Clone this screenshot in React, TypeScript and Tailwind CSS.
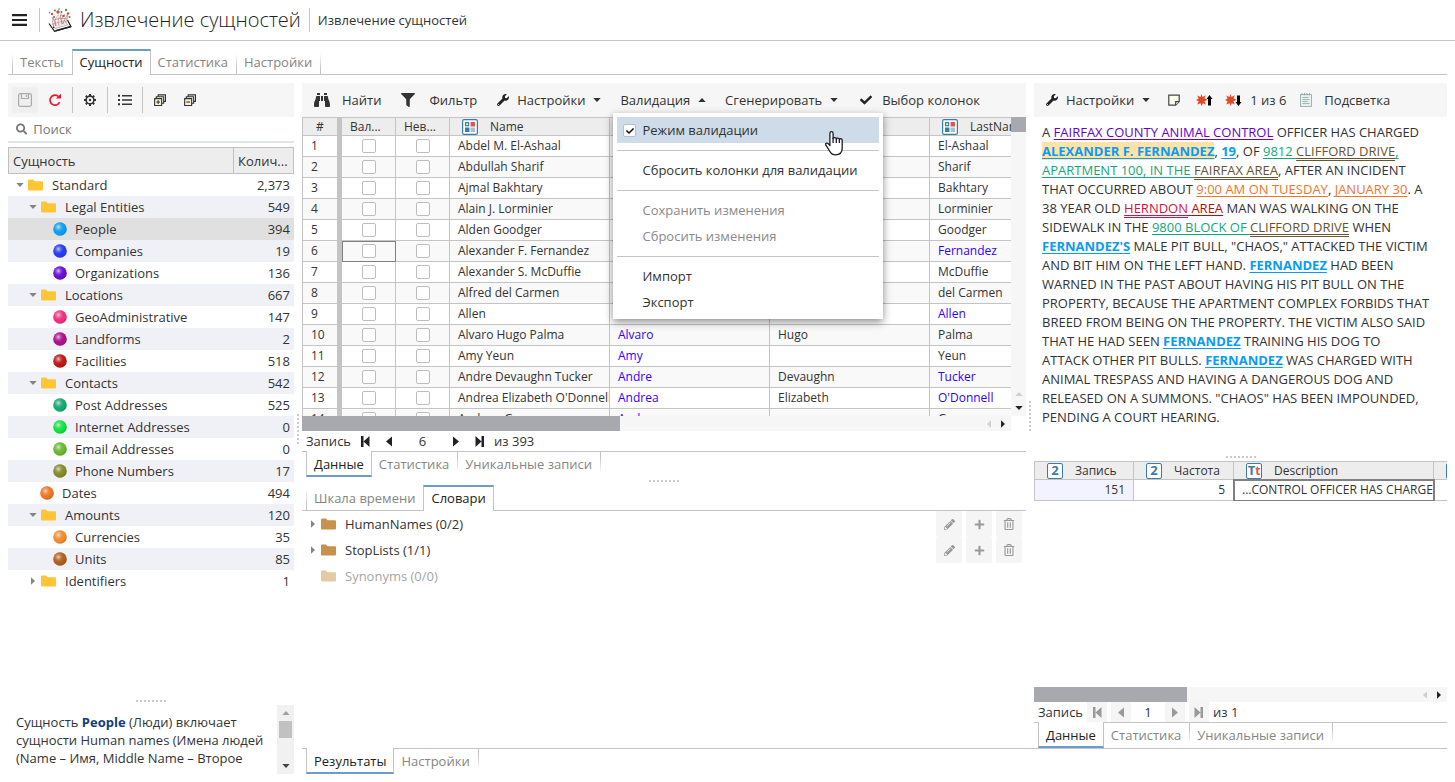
import React from "react";
import { clsx } from "clsx";
import {
  FaBinoculars,
  FaCheck,
  FaFilter,
  FaPencilAlt,
  FaPlus,
  FaRegTrashAlt,
  FaSearch,
  FaWrench,
} from "react-icons/fa";

/* ---------- icons ---------- */

function Caret({ dir = "down", className }: { dir?: "down" | "up" | "left" | "right"; className?: string }) {
  const paths = {
    down: "M.3 2h7.400L4 6z",
    up: "M.3 6h7.400L4 2z",
    left: "M6 .3v7.400L2 4z",
    right: "M2 .3v7.400L6 4z",
  };
  return (
    <svg viewBox="0 0 8 8" className={clsx("size-2 shrink-0", className)} fill="currentColor" aria-hidden="true">
      <path d={paths[dir]} />
    </svg>
  );
}

function Logo() {
  return (
    <svg viewBox="0 0 24 24" className="size-6" fill="none" aria-hidden="true">
      <path d="M1 15.500 6.500 23.300 23 18.600 19.500 12" stroke="#222" strokeWidth="1.200" />
      <path d="M7.500 22.800 23 18.600M5 19.500l3-.8" stroke="#222" strokeWidth="1.600" />
      <path d="M4.500 16 7 20.500 19.500 17 17 12.500z" fill="#f8eaea" stroke="#999" strokeWidth=".7" />
      <path d="M6 18c-2-3-2-8 1-10M8 18C6 13 8 8 11 7M11 17.500C9 12 11 8 14 7M14 16.500c-1-5 0-8 3-10M17 15c2-2 3-5 2-8M6 12c4-2 9-2 13-1" stroke="#dc7a7a" strokeWidth=".8" />
      <path d="M4 9c3 4 3 6 4 9M13 5c-1 5 0 9 2 11M20 6c-2 3-4 6-5 10" stroke="#777" strokeWidth=".6" />
      <g fill="#d94a4a">
        <circle cx="10" cy="4" r="1.700" />
        <circle cx="4" cy="6" r="1.200" />
        <circle cx="15.500" cy="8" r="1.300" />
        <circle cx="20" cy="5.500" r="1.300" />
      </g>
      <g fill="#4d8f58">
        <circle cx="7" cy="2.500" r="1" />
        <circle cx="11" cy="1" r=".8" />
        <circle cx="18" cy="2" r="1.200" />
        <circle cx="13.500" cy="4" r="1" />
        <circle cx="1.500" cy="4.500" r=".8" />
        <circle cx="21.500" cy="9" r="1" />
        <circle cx="6" cy="9" r="1" />
      </g>
    </svg>
  );
}

function SaveIcon() {
  return (
    <svg viewBox="0 0 14 14" className="size-3.5" fill="none" stroke="currentColor" strokeWidth="1.200" aria-hidden="true">
      <rect x=".6" y=".6" width="12.800" height="12.800" rx="1.800" />
      <path d="M3.500.8v4.700h7V.8M8.500 2v2" />
    </svg>
  );
}

function RefreshIcon() {
  return (
    <svg viewBox="0 0 14 14" className="size-3.5" fill="none" stroke="currentColor" strokeWidth="1.600" aria-hidden="true">
      <path d="M11.600 9.200A5 5 0 1 1 10.600 3.600" />
      <path d="M8 5.600h5V.8z" fill="currentColor" stroke="none" />
    </svg>
  );
}

function GearIcon() {
  return (
    <svg viewBox="0 0 14 14" className="size-3.5" fill="none" stroke="currentColor" aria-hidden="true">
      <circle cx="7" cy="7" r="3.900" strokeWidth="1.600" />
      <circle cx="7" cy="7" r="1.200" fill="currentColor" stroke="none" />
      <path
        d="M7 1v2M7 11v2M1 7h2M11 7h2M2.800 2.800l1.400 1.400M9.800 9.800l1.400 1.400M2.800 11.200l1.400-1.400M9.800 4.200l1.400-1.400"
        strokeWidth="2"
      />
    </svg>
  );
}

function ListIcon() {
  return (
    <svg viewBox="0 0 14 12" className="h-3 w-3.5" fill="currentColor" aria-hidden="true">
      <path d="M4 1h10v1.400H4zM4 5.300h10v1.400H4zM4 9.600h10V11H4zM0 .7h2v2H0zM0 5h2v2H0zM0 9.300h2v2H0z" />
    </svg>
  );
}

function StackIcon({ plus }: { plus?: boolean }) {
  return (
    <svg viewBox="0 0 13 13" className="size-3" fill="none" stroke="currentColor" strokeWidth="1.200" aria-hidden="true">
      <path d="M4.500 3V1h8v7h-2" />
      <path d="M2.500 5V3h8v7h-2" />
      <path d="M.7 5h7.600v7.400H.7z" fill="#fff3d0" />
      <path d={plus ? "M2.500 8.700h4M4.500 6.700v4" : "M2.500 8.700h4"} />
    </svg>
  );
}

function Folder({ color = "#ffc535" }: { color?: string }) {
  return (
    <svg viewBox="0 0 17 12" className="h-3 w-[17px] shrink-0" aria-hidden="true">
      <path d="M1 1.500Q1 .5 2 .5h4l1.500 1.700H15q1 0 1 1v7.300q0 1-1 1H2q-1 0-1-1z" fill={color} />
    </svg>
  );
}

function Ball({ color }: { color: string }) {
  const id = "ball" + color.slice(1);
  return (
    <svg viewBox="0 0 14 14" className="size-3.5 shrink-0" aria-hidden="true">
      <radialGradient id={id} cx=".38" cy=".35" r=".62">
        <stop offset="0" stopColor="#fff" stopOpacity=".75" />
        <stop offset=".7" stopColor={color} stopOpacity="0" />
        <stop offset="1" stopColor="#000" stopOpacity=".12" />
      </radialGradient>
      <circle cx="7" cy="7" r="6.800" fill={color} />
      <circle cx="7" cy="7" r="6.800" fill={`url(#${id})`} />
    </svg>
  );
}

function CategoryIcon() {
  return (
    <svg viewBox="0 0 16 16" className="size-4 shrink-0" aria-hidden="true">
      <rect x=".6" y=".6" width="14.800" height="14.800" rx="1.500" fill="#fff" stroke="#3a7ca8" strokeWidth="1.200" />
      <path d="M3.600 3.600h3v3h-3z" fill="#fff" stroke="#3a7ca8" strokeWidth="1.200" />
      <path d="M8.500 3H13v4.500H8.500z" fill="#e2574c" />
      <path d="M3 8.500h4.500V13H3z" fill="#3a7ca8" />
      <path d="M8.500 8.500H13V13H8.500z" fill="#a9bfd0" />
    </svg>
  );
}

function NumberIcon() {
  return (
    <span className="flex size-4 shrink-0 items-center justify-center rounded-xs border border-[#3a7ca8] bg-white text-[13px] leading-none font-bold text-[#3a7ca8]">
      2
    </span>
  );
}

function TextIcon() {
  return (
    <span className="flex size-4 shrink-0 items-center justify-center rounded-xs border border-[#3a7ca8] bg-white text-[13px] leading-none font-bold text-[#3a7ca8]">
      T<span className="text-[12px] text-[#e2574c]">t</span>
    </span>
  );
}

function BurstIcon({ down }: { down?: boolean }) {
  return (
    <svg viewBox="0 0 17 12" className="h-3 w-[17px]" aria-hidden="true">
      <path
        d="M5.500 0l1 3L9.700 1.200 8.500 4.300 11.500 5.700 8.500 7.200 9.800 10.500 6.700 9.200l-1 2.800L4.500 9.200 1.300 10.600 2.600 7.300 0 6l2.600-1.400L1.200 1.500l3.300 1.500z"
        fill="#e04a26"
      />
      <path d={down ? "M13.500 12 10.500 8h1.500V1.500h3V8h1.500z" : "M13.500 1 10.500 5h1.500v6.500h3V5h1.500z"} fill="#000" />
    </svg>
  );
}

function NoteIcon() {
  return (
    <svg viewBox="0 0 12 12" className="size-3" fill="#fffdf0" stroke="#444" strokeWidth="1.200" aria-hidden="true">
      <path d="M.8 1.200h10.400v6.500l-3.500 3.500H.8z" />
      <path d="M11 7.700H7.700V11" />
    </svg>
  );
}

function DocIcon() {
  return (
    <svg viewBox="0 0 12 14" className="h-3.5 w-3" fill="none" aria-hidden="true">
      <path d="M.5 1.500h11v12H.5z" fill="#e6efee" stroke="#9db5b3" />
      <path d="M2 .2v2M4.500.2v2M7 .2v2M9.500.2v2" stroke="#8aa5a3" />
      <path d="M2.500 4.500h6M2.500 6.500h7M2.500 8.500h5M2.500 10.500h7" stroke="#9fbab7" />
    </svg>
  );
}

function SkipIcon({ end }: { end?: boolean }) {
  return (
    <svg viewBox="0 0 10 11" className="h-[11px] w-2.5" fill="currentColor" aria-hidden="true">
      <path d={end ? "M.5 0v11L6.500 5.500zM6.500 0H9v11H6.500z" : "M9.500 0v11L3.500 5.500zM1 0h2.500v11H1z"} />
    </svg>
  );
}

function StepIcon({ next }: { next?: boolean }) {
  return (
    <svg viewBox="0 0 10 11" className="h-[11px] w-2.5" fill="currentColor" aria-hidden="true">
      <path d={next ? "M2 .5v10l6-5z" : "M8 .5v10l-6-5z"} />
    </svg>
  );
}

function HandCursor() {
  return (
    <svg
      viewBox="0 0 18 25"
      className="pointer-events-none absolute top-[14px] right-[36px] h-[25px] w-[18px]"
      fill="#fff"
      stroke="#1c1c2c"
      strokeWidth="1.300"
      strokeLinejoin="round"
      aria-hidden="true"
    >
      <path d="M6.500.7C5.400.7 4.900 1.500 4.900 2.400v12.100L3.200 12.600c-.8-.8-2-.7-2.400 0s0 1.400.4 2.100L4.600 20c1.200 2.500 2.900 3.800 5.900 3.800 4.300 0 6.700-2.800 6.700-6.800V9.200c0-1.800-2.600-1.900-2.800-.6-.2-1.700-2.800-1.900-3.100-.7-.4-1.600-2.900-1.700-3.200-.5v-5C8.100 1.400 7.600.7 6.500.7z" />
      <path d="M8.100 7v5M11.300 7.800V12M14.400 8.500V12" fill="none" />
    </svg>
  );
}

/* ---------- shared pieces ---------- */

function Tabs({ items, active, bottom }: { items: string[]; active: number; bottom?: boolean }) {
  const line = bottom ? "border-t border-[#c4c4c4]" : "border-b border-[#c4c4c4]";
  const sep = clsx(
    "w-px shrink-0 from-[#c4c4c4] from-30% to-transparent",
    bottom ? "mb-1 bg-linear-to-b" : "mt-1 bg-linear-to-t"
  );
  return (
    <div role="tablist" className="flex h-[26px] shrink-0 text-[13px]">
      <div className={clsx("w-1", line)} />
      {items.map((label, i) => (
        <React.Fragment key={label}>
          {i === 0 && active !== 0 && <div className={sep} />}
          <button
            type="button"
            role="tab"
            aria-selected={i === active}
            className={clsx(
              "whitespace-nowrap",
              i === active
                ? "border-x border-x-[#c4c4c4] px-[7px] text-[#222]"
                : ["pr-2 pl-[7px] text-[#858585]", line, bottom && "pb-0.5"],
              i === active && (bottom ? "border-b-2 border-b-[#6f9bc8] pt-px" : "border-t-2 border-t-[#6f9bc8] pb-0.5")
            )}
          >
            {label}
          </button>
          {i !== active && i + 1 !== active && <div className={sep} />}
        </React.Fragment>
      ))}
      <div className={clsx("flex-1", line)} />
    </div>
  );
}

function Grip({ vertical }: { vertical?: boolean }) {
  return (
    <div className={clsx("flex shrink-0 items-center justify-center", vertical ? "w-2" : "h-2")}>
      <div className={clsx("flex gap-0.5", vertical && "flex-col")}>
        {[0, 1, 2, 3, 4, 5, 6, 7].map((n) => (
          <span key={n} className="size-0.5 bg-[#cbcbcb]" />
        ))}
      </div>
    </div>
  );
}

function HScroll({ thumb }: { thumb: string }) {
  return (
    <div className="flex h-[15px] shrink-0 items-center bg-[#f6f6f6]">
      <div className="h-full bg-[#a8a9ae]" style={{ width: thumb }} />
      <Caret dir="left" className="ml-auto text-[#d0d0d0]" />
      <Caret dir="right" className="mr-1 ml-1.5 text-[#222]" />
    </div>
  );
}

function Pager({ value, total, disabled }: { value: string; total: string; disabled?: boolean }) {
  const btn = clsx(
    "flex h-5 w-5 items-center justify-center",
    disabled ? "bg-[#f5f5f5] text-[#999]" : "text-[#222]"
  );
  return (
    <div className="flex h-5 shrink-0 items-center gap-1 pl-1 text-[13px]">
      <span>Запись</span>
      <button type="button" aria-label="Первая" disabled={disabled} className={btn}>
        <SkipIcon />
      </button>
      <button type="button" aria-label="Предыдущая" disabled={disabled} className={btn}>
        <StepIcon />
      </button>
      <input
        aria-label="Номер записи"
        defaultValue={value}
        className={clsx("h-5 text-center outline-none", disabled ? "w-[26px]" : "w-[39px]")}
      />
      <button type="button" aria-label="Следующая" disabled={disabled} className={btn}>
        <StepIcon next />
      </button>
      <button type="button" aria-label="Последняя" disabled={disabled} className={btn}>
        <SkipIcon end />
      </button>
      <span>{total}</span>
    </div>
  );
}

function ToolButton({
  icon,
  children,
  caret,
  className,
}: {
  icon?: React.ReactNode;
  children?: React.ReactNode;
  caret?: "up" | "down";
  className?: string;
}) {
  return (
    <button type="button" className={clsx("flex h-[26px] shrink-0 items-center whitespace-nowrap", className)}>
      {icon}
      {children}
      {caret && <Caret dir={caret} className="ml-2" />}
    </button>
  );
}

/* ---------- left panel ---------- */

type Entity = { name: string; count: string; level: number; open?: boolean; color?: string; selected?: boolean };

const entities: Entity[] = [
  { name: "Standard", count: "2,373", level: 0, open: true },
  { name: "Legal Entities", count: "549", level: 1, open: true },
  { name: "People", count: "394", level: 2, color: "#109df0", selected: true },
  { name: "Companies", count: "19", level: 2, color: "#2b3cf0" },
  { name: "Organizations", count: "136", level: 2, color: "#6a0fd6" },
  { name: "Locations", count: "667", level: 1, open: true },
  { name: "GeoAdministrative", count: "147", level: 2, color: "#f52f80" },
  { name: "Landforms", count: "2", level: 2, color: "#ab1290" },
  { name: "Facilities", count: "518", level: 2, color: "#c01818" },
  { name: "Contacts", count: "542", level: 1, open: true },
  { name: "Post Addresses", count: "525", level: 2, color: "#16a974" },
  { name: "Internet Addresses", count: "0", level: 2, color: "#14e044" },
  { name: "Email Addresses", count: "0", level: 2, color: "#6cb833" },
  { name: "Phone Numbers", count: "17", level: 2, color: "#868a28" },
  { name: "Dates", count: "494", level: 1, color: "#ee7628" },
  { name: "Amounts", count: "120", level: 1, open: true },
  { name: "Currencies", count: "35", level: 2, color: "#ef8d2e" },
  { name: "Units", count: "85", level: 2, color: "#b0601f" },
  { name: "Identifiers", count: "1", level: 1 },
];

const indent = ["pl-[6px]", "pl-[19px]", "pl-[32px]"];

function EntityPanel() {
  return (
    <aside className="flex w-[286px] shrink-0 flex-col">
      <div className="flex h-[34px] shrink-0 items-center bg-[#f6f6f6] px-1">
        <button type="button" aria-label="Сохранить" disabled className="flex size-[26px] items-center justify-center bg-[#efefef] text-[#aaa]">
          <SaveIcon />
        </button>
        <button type="button" aria-label="Обновить" className="ml-1 flex size-[26px] items-center justify-center text-[#f01428]">
          <RefreshIcon />
        </button>
        <div className="mx-1 h-[26px] w-px bg-[#c4c4c4]" />
        <button type="button" aria-label="Параметры" className="flex size-[26px] items-center justify-center">
          <GearIcon />
        </button>
        <div className="mx-1 h-[26px] w-px bg-[#c4c4c4]" />
        <button type="button" aria-label="Список" className="flex size-[26px] items-center justify-center">
          <ListIcon />
        </button>
        <div className="mx-1 h-[26px] w-px bg-[#c4c4c4]" />
        <button type="button" aria-label="Развернуть" className="flex size-[26px] items-center justify-center">
          <StackIcon plus />
        </button>
        <button type="button" aria-label="Свернуть" className="ml-1 flex size-[26px] items-center justify-center">
          <StackIcon />
        </button>
      </div>
      <label className="flex h-[26px] shrink-0 items-center gap-1.5 border-b-2 border-[#e0e4ea] pl-2">
        <FaSearch className="size-3 text-[#777]" />
        <input type="search" aria-label="Поиск" placeholder="Поиск" className="w-full outline-none placeholder:text-[#777]" />
      </label>
      <div className="min-h-0 flex-1 overflow-hidden pt-1">
        <table className="w-full table-fixed border-separate border-spacing-0">
          <colgroup>
            <col />
            <col className="w-[61px]" />
          </colgroup>
          <thead>
            <tr className="h-[27px] bg-[#ededed] text-left">
              <th className="border border-r-0 border-[#c0c0c0] p-0 pl-1 font-normal">Сущность</th>
              <th className="border border-[#c0c0c0] p-0 pl-1 font-normal">Колич...</th>
            </tr>
          </thead>
          <tbody>
            {entities.map((e, i) => (
              <tr key={e.name} className={clsx("h-[22px]", e.selected ? "bg-[#e0e0e0]" : i % 2 ? "bg-[#f0f1f7]" : "bg-white")}>
                <td className="p-0">
                  <div className={clsx("flex items-center", indent[e.level])}>
                    <span className="flex w-[13px] shrink-0">
                      {!e.color && <Caret dir={e.open ? "down" : "right"} className="ml-0.5 text-[#858585]" />}
                    </span>
                    {e.color ? <Ball color={e.color} /> : <Folder />}
                    <span className="ml-2">{e.name}</span>
                  </div>
                </td>
                <td className="p-0 pr-1 text-right">{e.count}</td>
              </tr>
            ))}
          </tbody>
        </table>
      </div>
      <Grip />
      <div className="flex h-[69px] shrink-0">
        <p className="flex-1 overflow-hidden pt-2 pl-2 leading-[18px] whitespace-nowrap">
          Сущность <b className="text-[#123c7c]">People</b> (Люди) включает
          <br />
          сущности Human names (Имена людей
          <br />
          (Name – Имя, Middle Name – Второе
        </p>
        <div className="flex w-[17px] flex-col items-center bg-[#f1f1f1] py-1">
          <Caret dir="up" className="text-[#a0a0a0]" />
          <div className="mt-1 h-[17px] w-[13px] bg-[#c1c1c1]" />
          <Caret dir="down" className="mt-auto text-[#444]" />
        </div>
      </div>
    </aside>
  );
}

/* ---------- names grid ---------- */

// name, first name, middle name, last name; "*" marks an edited value
const people = [
  ["Abdel M. El-Ashaal", "", "", "El-Ashaal"],
  ["Abdullah Sharif", "", "", "Sharif"],
  ["Ajmal Bakhtary", "", "", "Bakhtary"],
  ["Alain J. Lorminier", "", "", "Lorminier"],
  ["Alden Goodger", "", "", "Goodger"],
  ["Alexander F. Fernandez", "", "", "*Fernandez"],
  ["Alexander S. McDuffie", "", "", "McDuffie"],
  ["Alfred del Carmen", "", "", "del Carmen"],
  ["Allen", "", "", "*Allen"],
  ["Alvaro Hugo Palma", "*Alvaro", "Hugo", "Palma"],
  ["Amy Yeun", "*Amy", "", "Yeun"],
  ["Andre Devaughn Tucker", "*Andre", "Devaughn", "*Tucker"],
  ["Andrea Elizabeth O'Donnell", "*Andrea", "Elizabeth", "*O'Donnell"],
  ["Andrew Graves", "*Andrew", "", "Graves"],
];

const cell = "border-r border-b border-[#c4c4c4] p-0";

function RowCheck({ label }: { label: string }) {
  return (
    <input
      type="checkbox"
      aria-label={label}
      className="mx-auto block size-3.5 appearance-none rounded-xs border border-[#bdbdbd] bg-white"
    />
  );
}

function PeopleGrid() {
  return (
    <div className="flex min-h-0 flex-1 flex-col">
      <div className="flex min-h-0 flex-1">
        <div className="min-w-0 flex-1 overflow-hidden border-t border-l border-[#c4c4c4]">
          <table className="w-[787px] table-fixed border-separate border-spacing-0 text-[12px]">
            <colgroup>
              <col className="w-[39px]" />
              <col className="w-[54px]" />
              <col className="w-[54px]" />
              <col className="w-[160px]" />
              <col className="w-[160px]" />
              <col className="w-[160px]" />
              <col className="w-[160px]" />
            </colgroup>
            <thead>
              <tr className="h-[18px] bg-[#ededed] leading-[16px]">
                <th className={clsx(cell, "border-r-[5px] font-normal")}>#</th>
                <th className={clsx(cell, "pl-2 text-left font-normal")}>Вал...</th>
                <th className={clsx(cell, "pl-2 text-left font-normal")}>Нев...</th>
                <th className={clsx(cell, "font-normal")}>
                  <span className="flex items-center gap-3 pl-3">
                    <CategoryIcon />
                    Name
                  </span>
                </th>
                <th className={cell} />
                <th className={cell} />
                <th className={clsx(cell, "font-normal")}>
                  <span className="flex items-center gap-3 pl-3">
                    <CategoryIcon />
                    LastName
                  </span>
                </th>
              </tr>
            </thead>
            <tbody>
              {people.map((row, i) => (
                <tr key={row[0]} className={clsx("h-[21px]", i % 2 && "bg-[#f9f9f9]")}>
                  <td className={clsx(cell, "border-r-[5px] pl-2")}>{i + 1}</td>
                  <td className={clsx(cell, i === 5 && "outline-1 -outline-offset-1 outline-[#808080]")}>
                    <RowCheck label={"Валидно " + (i + 1)} />
                  </td>
                  <td className={cell}>
                    <RowCheck label={"Невалидно " + (i + 1)} />
                  </td>
                  {row.map((value, n) => (
                    <td
                      key={n}
                      className={clsx(cell, "overflow-hidden pl-2 whitespace-nowrap", value[0] === "*" && "text-[#3300ff]")}
                    >
                      {value.replace("*", "")}
                    </td>
                  ))}
                </tr>
              ))}
            </tbody>
          </table>
        </div>
        <div className="flex w-[15px] shrink-0 flex-col items-center bg-[#f6f6f6] pb-1">
          <div className="size-[15px] bg-[#a8a9ae]" />
          <Caret dir="up" className="mt-auto text-[#d0d0d0]" />
          <Caret dir="down" className="mt-1.5 text-[#222]" />
        </div>
      </div>
      <div className="pr-[15px]">
        <HScroll thumb="44.8%" />
      </div>
    </div>
  );
}

function MenuItem({ children, disabled }: { children: React.ReactNode; disabled?: boolean }) {
  return (
    <button
      type="button"
      role="menuitem"
      disabled={disabled}
      className="block h-[26px] w-full pl-[25px] text-left whitespace-nowrap disabled:text-[#8a8a8a]"
    >
      {children}
    </button>
  );
}

function ValidationMenu() {
  const sep = <div className="mt-[7px] mb-[6px] h-px bg-[#c4c4c4]" />;
  return (
    <div
      role="menu"
      className="absolute top-full left-0 z-20 w-[270px] bg-white p-1 shadow-[0_3px_8px_rgba(0,0,0,0.45)]"
    >
      <label className="relative flex h-[26px] items-center bg-[#cedbe8] pl-1.5 whitespace-nowrap">
        <span className="relative flex">
          <input
            type="checkbox"
            defaultChecked
            className="size-[13px] appearance-none rounded-xs border border-[#b5bfc9] bg-white"
          />
          <FaCheck className="absolute top-[3px] left-[3px] size-2 text-[#111]" />
        </span>
        <span className="ml-1.5">Режим валидации</span>
        <HandCursor />
      </label>
      {sep}
      <MenuItem>Сбросить колонки для валидации</MenuItem>
      {sep}
      <MenuItem disabled>Сохранить изменения</MenuItem>
      <MenuItem disabled>Сбросить изменения</MenuItem>
      {sep}
      <MenuItem>Импорт</MenuItem>
      <MenuItem>Экспорт</MenuItem>
    </div>
  );
}

/* ---------- dictionaries ---------- */

const dictionaries = [
  { name: "HumanNames (0/2)", active: true },
  { name: "StopLists (1/1)", active: true },
  { name: "Synonyms (0/0)", active: false },
];

function Dictionaries() {
  const btn = "flex size-[26px] items-center justify-center rounded-xs bg-[#f5f5f5] text-[#999]";
  return (
    <ul className="min-h-0 flex-1 overflow-hidden">
      {dictionaries.map((d) => (
        <li key={d.name} className="flex h-[26px] items-center gap-1 pr-1 pl-2">
          <span className="flex w-1.5 shrink-0 justify-center">
            {d.active && <Caret dir="right" className="text-[#858585]" />}
          </span>
          <Folder color={d.active ? "#c8914c" : "#e3caa5"} />
          <span className={clsx("ml-1 mr-auto", !d.active && "text-[#a5a5a5]")}>{d.name}</span>
          {d.active && (
            <>
              <button type="button" aria-label="Изменить" className={btn}>
                <FaPencilAlt className="size-[11px]" />
              </button>
              <button type="button" aria-label="Добавить" className={btn}>
                <FaPlus className="size-[11px]" />
              </button>
              <button type="button" aria-label="Удалить" className={btn}>
                <FaRegTrashAlt className="size-3" />
              </button>
            </>
          )}
        </li>
      ))}
    </ul>
  );
}

function CenterPanel() {
  return (
    <section className="flex min-w-0 flex-1 flex-col">
      <div className="flex h-[34px] shrink-0 items-center bg-[#f6f6f6] pl-3">
        <ToolButton icon={<FaBinoculars className="mr-3 size-4 text-[#333]" />}>Найти</ToolButton>
        <ToolButton icon={<FaFilter className="mr-3.5 size-3.5 text-[#333]" />} className="ml-5">
          Фильтр
        </ToolButton>
        <ToolButton icon={<FaWrench className="mr-2 size-3 text-[#222]" />} caret="down" className="ml-5">
          Настройки
        </ToolButton>
        <div className="relative ml-3">
          <ToolButton caret="up" className="px-[7px]">
            Валидация
          </ToolButton>
          <ValidationMenu />
        </div>
        <ToolButton caret="down" className="ml-3">
          Сгенерировать
        </ToolButton>
        <ToolButton icon={<FaCheck className="mr-2.5 size-3 text-[#222]" />} className="ml-[22px]">
          Выбор колонок
        </ToolButton>
      </div>
      <PeopleGrid />
      <Pager value="6" total="из 393" />
      <Tabs items={["Данные", "Статистика", "Уникальные записи"]} active={0} bottom />
      <Grip />
      <div className="flex h-[263px] shrink-0 flex-col">
        <Tabs items={["Шкала времени", "Словари"]} active={1} />
        <Dictionaries />
      </div>
    </section>
  );
}

/* ---------- document panel ---------- */

function Mark({ className, children }: { className: string; children: React.ReactNode }) {
  return (
    <a href="#" className={clsx("underline underline-offset-2", className)}>
      {children}
    </a>
  );
}

function Article() {
  const person = "font-bold text-[#0a9bf5]";
  return (
    <p className="min-h-0 flex-1 overflow-hidden pt-1.5 pl-2 text-[13px] leading-[19px] whitespace-nowrap">
      A <Mark className="text-[#6600c8]">FAIRFAX COUNTY ANIMAL CONTROL</Mark> OFFICER HAS CHARGED
      <br />
      <Mark className={clsx(person, "bg-[#ffe2a6]")}>ALEXANDER F. FERNANDEZ</Mark>, <Mark className={person}>19</Mark>, OF{" "}
      <Mark className="text-[#12a878]">9812 </Mark>
      <Mark className="text-[#66552f] decoration-double">CLIFFORD DRIVE</Mark>
      <Mark className="text-[#12a878]">,</Mark>
      <br />
      <Mark className="text-[#12a878]">APARTMENT 100, IN THE </Mark>
      <Mark className="text-[#66552f] decoration-double">FAIRFAX AREA</Mark>, AFTER AN INCIDENT
      <br />
      THAT OCCURRED ABOUT <Mark className="text-[#ee7628]">9:00 AM ON TUESDAY</Mark>,{" "}
      <Mark className="text-[#ee7628]">JANUARY 30</Mark>. A
      <br />
      38 YEAR OLD <Mark className="text-[#d8123c] decoration-double">HERNDON</Mark>
      <Mark className="text-[#b80c0c]"> AREA</Mark> MAN WAS WALKING ON THE
      <br />
      SIDEWALK IN THE <Mark className="text-[#12a878]">9800 BLOCK OF </Mark>
      <Mark className="text-[#66552f] decoration-double">CLIFFORD DRIVE</Mark> WHEN
      <br />
      <Mark className={person}>FERNANDEZ'S</Mark> MALE PIT BULL, "CHAOS," ATTACKED THE VICTIM
      <br />
      AND BIT HIM ON THE LEFT HAND. <Mark className={person}>FERNANDEZ</Mark> HAD BEEN
      <br />
      WARNED IN THE PAST ABOUT HAVING HIS PIT BULL ON THE
      <br />
      PROPERTY, BECAUSE THE APARTMENT COMPLEX FORBIDS THAT
      <br />
      BREED FROM BEING ON THE PROPERTY. THE VICTIM ALSO SAID
      <br />
      THAT HE HAD SEEN <Mark className={person}>FERNANDEZ</Mark> TRAINING HIS DOG TO
      <br />
      ATTACK OTHER PIT BULLS. <Mark className={person}>FERNANDEZ</Mark> WAS CHARGED WITH
      <br />
      ANIMAL TRESPASS AND HAVING A DANGEROUS DOG AND
      <br />
      RELEASED ON A SUMMONS. "CHAOS" HAS BEEN IMPOUNDED,
      <br />
      PENDING A COURT HEARING.
    </p>
  );
}

function RecordsGrid() {
  return (
    <div className="min-h-0 flex-1 overflow-hidden">
      <div className="overflow-hidden border-t border-l border-[#c4c4c4]">
        <table className="w-[600px] table-fixed border-separate border-spacing-0 text-[12px]">
          <colgroup>
            <col className="w-[99px]" />
            <col className="w-[100px]" />
            <col className="w-[200px]" />
            <col />
          </colgroup>
          <thead>
            <tr className="h-[18px] bg-[#ededed] leading-[16px]">
              <th className={clsx(cell, "font-normal")}>
                <span className="flex items-center gap-3 pl-3">
                  <NumberIcon />
                  Запись
                </span>
              </th>
              <th className={clsx(cell, "font-normal")}>
                <span className="flex items-center gap-3 pl-3">
                  <NumberIcon />
                  Частота
                </span>
              </th>
              <th className={clsx(cell, "font-normal")}>
                <span className="flex items-center gap-3 pl-3">
                  <TextIcon />
                  Description
                </span>
              </th>
              <th className={cell}>
                <span className="flex pl-3">
                  <NumberIcon />
                </span>
              </th>
            </tr>
          </thead>
          <tbody>
            <tr className="h-[21px]">
              <td className={clsx(cell, "bg-[#f3f3ff] pr-2 text-right")}>151</td>
              <td className={clsx(cell, "pr-2 text-right")}>5</td>
              <td className={clsx(cell, "outline-2 -outline-offset-1 outline-[#808080]")}>
                <div className="overflow-hidden pl-2 whitespace-nowrap">...CONTROL OFFICER HAS CHARGED</div>
              </td>
              <td className={cell} />
            </tr>
          </tbody>
        </table>
      </div>
    </div>
  );
}

function DocumentPanel() {
  return (
    <section className="flex w-[413px] shrink-0 flex-col">
      <div className="flex h-[34px] shrink-0 items-center bg-[#f6f6f6] pl-3">
        <ToolButton icon={<FaWrench className="mr-2 size-3 text-[#222]" />} caret="down">
          Настройки
        </ToolButton>
        <button type="button" aria-label="Заметка" className="ml-[18px]">
          <NoteIcon />
        </button>
        <button type="button" aria-label="Предыдущее" className="ml-4">
          <BurstIcon />
        </button>
        <button type="button" aria-label="Следующее" className="ml-3">
          <BurstIcon down />
        </button>
        <span className="ml-2">1 из 6</span>
        <ToolButton icon={<DocIcon />} className="ml-3.5 gap-3">
          Подсветка
        </ToolButton>
      </div>
      <Article />
      <Grip />
      <div className="flex h-[287px] shrink-0 flex-col">
        <RecordsGrid />
        <HScroll thumb="37%" />
        <Pager value="1" total="из 1" disabled />
        <Tabs items={["Данные", "Статистика", "Уникальные записи"]} active={0} bottom />
      </div>
    </section>
  );
}

export default function App() {
  return (
    <div className="flex h-screen flex-col overflow-hidden bg-white font-['Open_Sans',sans-serif] text-[13px] leading-[18px] text-[#333]">
      <header className="flex h-[41px] shrink-0 items-center border-b border-[#c4c4c4] pl-3">
        <button type="button" aria-label="Меню">
          <svg viewBox="0 0 15 12" className="h-3 w-[15px]" fill="#222" aria-hidden="true">
            <path d="M0 0h15v2.200H0zM0 4.900h15v2.200H0zM0 9.800h15V12H0z" />
          </svg>
        </button>
        <div className="mr-2 ml-3 h-6 w-px bg-[#c4c4c4]" />
        <Logo />
        <h1 className="ml-2 text-[20px] leading-6 font-light text-[#222]">Извлечение сущностей</h1>
        <div className="mx-2 h-6 w-px bg-[#c4c4c4]" />
        <span>Извлечение сущностей</span>
      </header>
      <div className="flex min-h-0 flex-1 flex-col px-2 pt-2 pb-2">
        <Tabs items={["Тексты", "Сущности", "Статистика", "Настройки"]} active={1} />
        <div className="flex min-h-0 flex-1 pt-2">
          <EntityPanel />
          <Grip vertical />
          <div className="flex min-w-0 flex-1 flex-col">
            <div className="flex min-h-0 flex-1">
              <CenterPanel />
              <Grip vertical />
              <DocumentPanel />
            </div>
            <Tabs items={["Результаты", "Настройки"]} active={0} bottom />
          </div>
        </div>
      </div>
    </div>
  );
}
